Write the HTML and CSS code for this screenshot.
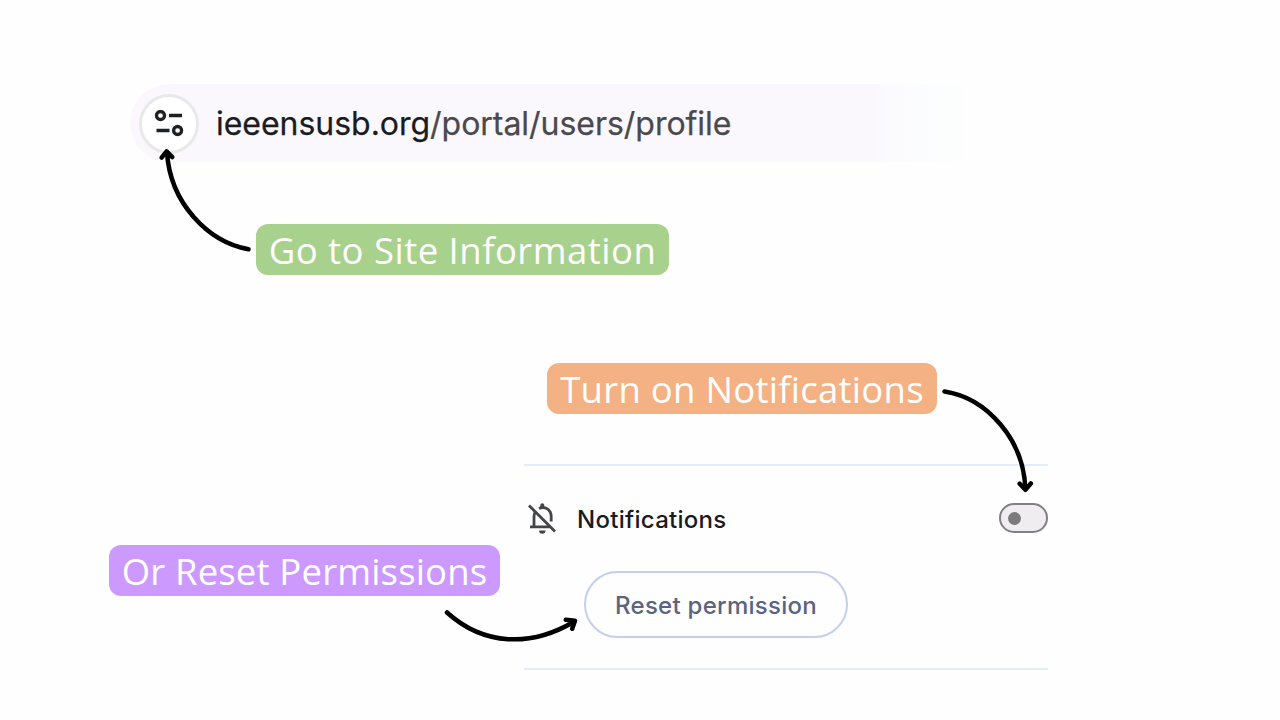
FILE: index.html
```html
<!DOCTYPE html>
<html lang="en">
<head>
<meta charset="utf-8">
<title>Enable notifications</title>
<link rel="stylesheet" href="styles.css">
</head>
<body>
<main class="slide">
  <div class="address-bar">
    <span class="site-info">
      <svg width="30" height="28" viewBox="0 0 30 28" fill="none" stroke="#1f2023" stroke-width="3.3">
        <circle cx="6.5" cy="5.5" r="4"/><path d="M15 5.5H28M2.5 20.5H15.5"/><circle cx="23.6" cy="20.5" r="4"/>
      </svg>
    </span>
    <span class="url">ieeensusb.org<span class="path">/portal/users/profile</span></span>
  </div>
  <section class="panel">
    <div class="row">
      <svg class="bell" width="30" height="32" viewBox="0 0 30 32" fill="none" stroke="#444548" stroke-width="2.8">
        <path d="M2 2.5L28 28.5M7 23.8V13.5C7 11.4 7.6 9.6 8.6 8.2M3 23.8H22.5M12 5.4C18 2.6 24.2 6.9 24.2 13.5V18.4"/>
        <path d="M13.3 5V2.2A2 2 0 0 1 17.3 2.2V5ZM12.1 27.5H18.5A3.2 3.2 0 0 1 12.1 27.5Z" fill="#444548" stroke="none"/>
      </svg>
      <span class="label">Notifications</span>
      <span class="toggle"><span class="knob"></span></span>
    </div>
    <button class="reset">Reset permission</button>
  </section>
  <div class="callout green">Go to Site Information</div>
  <div class="callout orange">Turn on Notifications</div>
  <div class="callout purple">Or Reset Permissions</div>
  <svg class="arrows" width="1280" height="720" viewBox="0 0 1280 720">
    <path d="M248.5 249.3C208 242 170 203 167 152M161.6 157.6L166.6 151.4L172.3 157.2"/>
    <path d="M944.5 391.5C987 398 1024 440 1025.3 489M1019.7 483.7L1025.4 489.8L1030.8 483.5"/>
    <path d="M447 612.5C484 646 531 647 573.5 622M565.8 619.7L575 620.7L572.2 628.8"/>
  </svg>
</main>
</body>
</html>
```

FILE: styles.css
```css
body { margin: 0; background: #fefefe; }
.slide {
  position: relative;
  width: 1280px;
  height: 720px;
  box-sizing: border-box;
  padding: 84px 0 0 130px;
  overflow: hidden;
  font-family: Inter, "Liberation Sans", sans-serif;
}
.address-bar {
  display: flex;
  align-items: center;
  width: 832px;
  height: 78px;
  box-sizing: border-box;
  padding: 2px 0 0 9px;
  border-radius: 39px 8px 8px 39px;
  background: linear-gradient(90deg, #faf8fd 0, #faf8fd 745px, #fbfbfe 765px, #fcfdfe 805px, #fdfdfd 832px);
}
.site-info {
  display: flex;
  align-items: center;
  justify-content: center;
  width: 60px;
  height: 60px;
  box-sizing: border-box;
  border: 3px solid #e9e9eb;
  border-radius: 50%;
  background: #fff;
}
.url {
  margin-left: 17px;
  font-size: 32px;
  line-height: 40px;
  letter-spacing: -0.03px;
  white-space: nowrap;
  color: #1c1b1f;
  -webkit-text-stroke: 0.25px currentColor;
}
.path { color: #4a494e; }
.panel {
  width: 524px;
  height: 206px;
  box-sizing: border-box;
  margin: 302px 0 0 394px;
  border-top: 2px solid #e2ecfb;
  border-bottom: 2px solid #e2ecfb;
}
.row { display: flex; align-items: center; height: 105px; }
.bell { margin-left: 3px; }
.label {
  margin-left: 20px;
  padding-top: 1px;
  font-size: 24px;
  font-weight: 500;
  letter-spacing: 0.28px;
  color: #1b1b1e;
}
.toggle {
  display: flex;
  align-items: center;
  width: 49px;
  height: 30px;
  box-sizing: border-box;
  margin: -1px 0 0 auto;
  padding-left: 7px;
  border: 2px solid #808082;
  border-radius: 15px;
  background: #efedef;
}
.knob { width: 13px; height: 13px; border-radius: 50%; background: #7b7b7d; }
.reset {
  display: block;
  width: 264px;
  height: 67px;
  margin: 0 0 0 60px;
  padding: 2px 0 0;
  border: 2px solid #c3cfec;
  border-radius: 34px;
  background: transparent;
  font-family: inherit;
  font-size: 24px;
  font-weight: 500;
  letter-spacing: 0.27px;
  color: #5a6380;
}
.callout {
  position: absolute;
  height: 51px;
  border-radius: 12px;
  font: 36.5px/53px "Open Sans", "Noto Sans", sans-serif;
  text-align: center;
  white-space: nowrap;
  color: #fff;
}
.green { left: 256px; top: 224px; width: 413px; background: #a8d18d; letter-spacing: 0.48px; }
.orange { left: 547px; top: 363px; width: 390px; background: #f4b183; letter-spacing: 0.27px; }
.purple { left: 109px; top: 545px; width: 391px; background: #cc99ff; letter-spacing: 0.17px; }
.arrows {
  position: absolute;
  left: 0;
  top: 0;
  fill: none;
  stroke: #000;
  stroke-width: 4.5;
  stroke-linecap: round;
  stroke-linejoin: round;
}
```
